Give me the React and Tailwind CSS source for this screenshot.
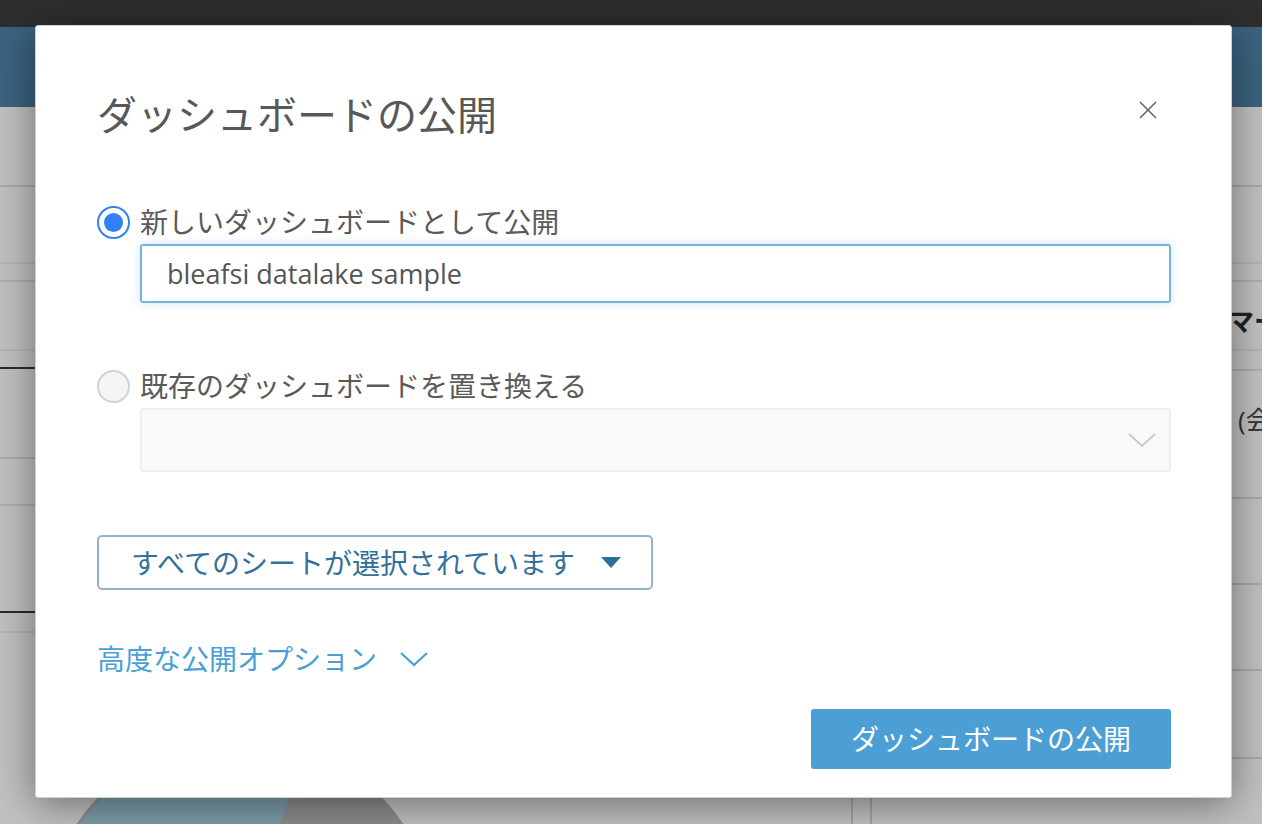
import { useState } from 'react';

const FONT = { fontFamily: '"Open Sans", "Noto Sans CJK JP", sans-serif' };

// dimmed page rows behind the dialog
const LEFT_ROWS = [
  { h: 80, b: 'border-[#a9a9a9]' },
  { h: 77, b: 'border-[#b5b5b5]' },
  { h: 18, b: 'border-[#adadad]' },
  { h: 69, b: 'border-[#b5b5b5]' },
  { h: 18, b: 'border-[#2b2b2b]' },
  { h: 90, b: 'border-[#adadad]' },
  { h: 47, b: 'border-[#adadad]' },
  { h: 107, b: 'border-[#2b2b2b]' },
  { h: 20, b: 'border-[#b2b2b2]' },
];

const RIGHT_ROWS = [
  { h: 80, b: 'border-[#a9a9a9]' },
  { h: 77, b: 'border-[#b5b5b5]' },
  { h: 18, b: 'border-[#adadad]' },
  { h: 69, b: 'border-[#b5b5b5]' },
  { h: 20, b: 'border-[#adadad]' },
  { h: 128, b: 'border-[#a9a9a9]' },
  { h: 86, b: 'border-[#a9a9a9]' },
  { h: 86, b: 'border-[#a9a9a9]' },
  { h: 88, b: 'border-[#a9a9a9]' },
];

function Background() {
  return (
    <div className="h-screen w-full flex flex-col bg-[#c1c1c1] overflow-hidden">
      <div className="h-[27px] bg-[#2e2e2e] shrink-0" />
      <div className="h-[80px] bg-[#3b6380] shrink-0" />
      <div className="flex flex-1">
        <div className="w-[853px] border-r-2 border-[#a3a3a3] flex flex-col relative">
          {LEFT_ROWS.map((r, i) => (
            <div key={i} className={`border-b-2 ${r.b}`} style={{ height: r.h }} />
          ))}
          <svg className="absolute left-0 top-[581px]" width="460" height="160" viewBox="0 0 460 160">
            <circle cx="240" cy="246" r="197" fill="#8c8c8c" />
            <path d="M240 246 L306 65 A197 197 0 0 0 43 240 Z" fill="#7c9ca8" />
          </svg>
        </div>
        <div className="w-[17px]" />
        <div className="flex-1 border-l-2 border-[#a3a3a3] flex flex-col overflow-hidden">
          {RIGHT_ROWS.map((r, i) => (
            <div key={i} className={`border-b-2 ${r.b} relative`} style={{ height: r.h }}>
              {i === 3 && (
                <span className="absolute left-[356px] top-[20px] text-[26px] font-bold text-[#222] whitespace-nowrap">マー</span>
              )}
              {i === 5 && (
                <span className="absolute left-[366px] top-[30px] text-[26px] text-[#333] whitespace-nowrap">(会</span>
              )}
            </div>
          ))}
        </div>
      </div>
    </div>
  );
}

function Radio({ checked, onClick }) {
  return (
    <button
      onClick={onClick}
      className={`w-[33px] h-[33px] rounded-full border-2 flex items-center justify-center shrink-0 ${
        checked ? 'border-[#3281f4] bg-white' : 'border-[#d2d2d2] bg-[#f5f5f5]'
      }`}
    >
      {checked && <span className="w-[19px] h-[19px] rounded-full bg-[#3281f4]" />}
    </button>
  );
}

export default function App() {
  const [mode, setMode] = useState('new');
  const [name, setName] = useState('bleafsi datalake sample');

  return (
    <div className="relative" style={FONT}>
      <Background />
      <div className="absolute left-0 top-0 right-0 bottom-0">
        <div className="absolute left-[35px] top-[25px] w-[1197px] h-[773px] bg-white rounded-[3px] border border-[#d0d0d0] shadow-[0_6px_40px_rgba(0,0,0,0.45)] pl-[61px] pr-[60px] pt-[65px] flex flex-col">
          <div className="flex items-center justify-between">
            <h1 className="text-[40px] leading-[48px] text-[#585858] font-normal">ダッシュボードの公開</h1>
            <button className="mr-[14px] mt-[-10px] text-[#666]">
              <svg width="18" height="18" viewBox="0 0 18 18" fill="none" stroke="currentColor" strokeWidth="1.6">
                <path d="M1 1 L17 17 M17 1 L1 17" />
              </svg>
            </button>
          </div>

          <div className="mt-[65px] flex items-center gap-[10px] h-[36px]">
            <Radio checked={mode === 'new'} onClick={() => setMode('new')} />
            <span className="text-[28px] leading-[36px] text-[#5a5a5a]">新しいダッシュボードとして公開</span>
          </div>
          <div className="mt-[4px] ml-[43px]">
            <input
              value={name}
              onChange={e => setName(e.target.value)}
              className="w-full h-[59px] border-2 border-[#72b5de] rounded-[3px] px-[25px] text-[27px] text-[#555] outline-none shadow-[0_0_10px_rgba(114,181,222,0.35)]"
            />
          </div>

          <div className="mt-[65px] flex items-center gap-[10px] h-[36px]">
            <Radio checked={mode === 'replace'} onClick={() => setMode('replace')} />
            <span className="text-[28px] leading-[36px] text-[#5a5a5a]">既存のダッシュボードを置き換える</span>
          </div>
          <div className="mt-[4px] ml-[43px] h-[64px] bg-[#fafafa] border-2 border-[#efefef] rounded-[3px] flex items-center justify-end pr-[12px]">
            <svg width="30" height="18" viewBox="0 0 30 18" fill="none" stroke="#cacaca" strokeWidth="2">
              <path d="M2 3 L15 15 L28 3" />
            </svg>
          </div>

          <div className="mt-[63px]">
            <button className="h-[55px] w-[556px] border-2 border-[#92b4cb] rounded-[5px] flex items-center pl-[32px] gap-[26px] text-[#33709a]">
              <span className="text-[28px] leading-[36px]">すべてのシートが選択されています</span>
              <svg width="20" height="11" viewBox="0 0 20 11">
                <path d="M0 0 L20 0 L10 11 Z" fill="#2f6e95" />
              </svg>
            </button>
          </div>

          <div className="mt-[51px] flex items-center gap-[22px] h-[36px] text-[#4a9fd6]">
            <span className="text-[28px] leading-[36px]">高度な公開オプション</span>
            <svg width="30" height="16" viewBox="0 0 30 16" fill="none" stroke="currentColor" strokeWidth="2.2">
              <path d="M2 2 L15 14 L28 2" />
            </svg>
          </div>

          <div className="mt-[32px] flex justify-end">
            <button className="w-[360px] h-[60px] bg-[#4b9fd4] rounded-[3px] text-white text-[28px] leading-[36px]">
              ダッシュボードの公開
            </button>
          </div>
        </div>
      </div>
    </div>
  );
}
